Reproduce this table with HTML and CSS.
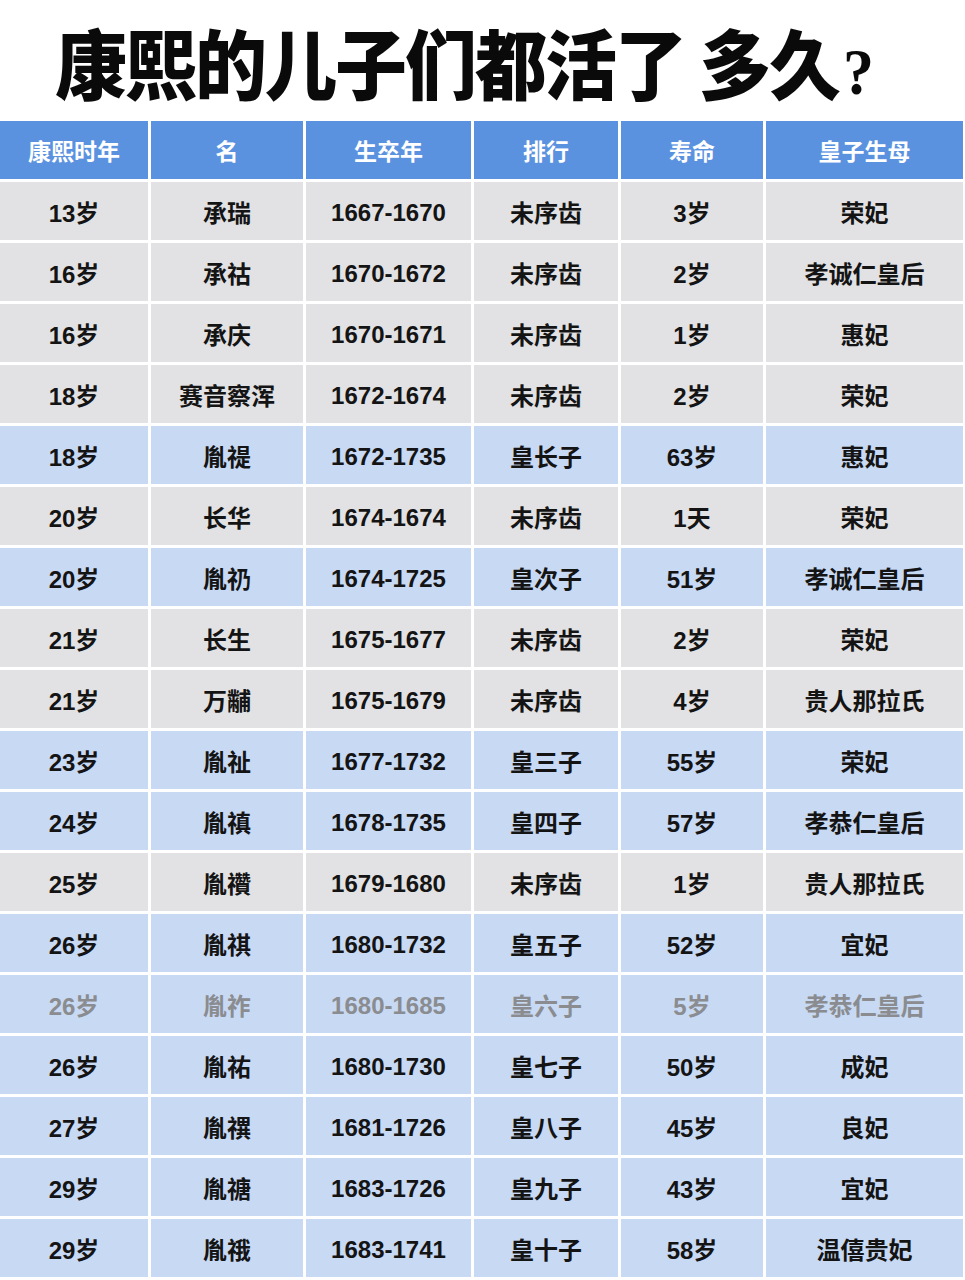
FILE: index.html
```html
<!DOCTYPE html>
<html lang="zh-CN">
<head>
<meta charset="utf-8">
<title>康熙的儿子们都活了多久？</title>
<link rel="stylesheet" href="styles.css">
</head>
<body>
<header class="title-wrap">
  <h1 class="title">康熙的儿子们都活了<span class="gap"></span>多久<span class="q">?</span></h1>
</header>
<div class="table">
  <div class="cell head">康熙时年</div><div class="cell head">名</div><div class="cell head">生卒年</div><div class="cell head">排行</div><div class="cell head">寿命</div><div class="cell head">皇子生母</div>

  <div class="cell g">13岁</div><div class="cell g">承瑞</div><div class="cell g num">1667-1670</div><div class="cell g">未序齿</div><div class="cell g">3岁</div><div class="cell g">荣妃</div>
  <div class="cell g">16岁</div><div class="cell g">承祜</div><div class="cell g num">1670-1672</div><div class="cell g">未序齿</div><div class="cell g">2岁</div><div class="cell g">孝诚仁皇后</div>
  <div class="cell g">16岁</div><div class="cell g">承庆</div><div class="cell g num">1670-1671</div><div class="cell g">未序齿</div><div class="cell g">1岁</div><div class="cell g">惠妃</div>
  <div class="cell g">18岁</div><div class="cell g">赛音察浑</div><div class="cell g num">1672-1674</div><div class="cell g">未序齿</div><div class="cell g">2岁</div><div class="cell g">荣妃</div>
  <div class="cell b">18岁</div><div class="cell b">胤禔</div><div class="cell b num">1672-1735</div><div class="cell b">皇长子</div><div class="cell b">63岁</div><div class="cell b">惠妃</div>
  <div class="cell g">20岁</div><div class="cell g">长华</div><div class="cell g num">1674-1674</div><div class="cell g">未序齿</div><div class="cell g">1天</div><div class="cell g">荣妃</div>
  <div class="cell b">20岁</div><div class="cell b">胤礽</div><div class="cell b num">1674-1725</div><div class="cell b">皇次子</div><div class="cell b">51岁</div><div class="cell b">孝诚仁皇后</div>
  <div class="cell g">21岁</div><div class="cell g">长生</div><div class="cell g num">1675-1677</div><div class="cell g">未序齿</div><div class="cell g">2岁</div><div class="cell g">荣妃</div>
  <div class="cell g">21岁</div><div class="cell g">万黼</div><div class="cell g num">1675-1679</div><div class="cell g">未序齿</div><div class="cell g">4岁</div><div class="cell g">贵人那拉氏</div>
  <div class="cell b">23岁</div><div class="cell b">胤祉</div><div class="cell b num">1677-1732</div><div class="cell b">皇三子</div><div class="cell b">55岁</div><div class="cell b">荣妃</div>
  <div class="cell b">24岁</div><div class="cell b">胤禛</div><div class="cell b num">1678-1735</div><div class="cell b">皇四子</div><div class="cell b">57岁</div><div class="cell b">孝恭仁皇后</div>
  <div class="cell g">25岁</div><div class="cell g">胤禶</div><div class="cell g num">1679-1680</div><div class="cell g">未序齿</div><div class="cell g">1岁</div><div class="cell g">贵人那拉氏</div>
  <div class="cell b">26岁</div><div class="cell b">胤祺</div><div class="cell b num">1680-1732</div><div class="cell b">皇五子</div><div class="cell b">52岁</div><div class="cell b">宜妃</div>
  <div class="cell b dim">26岁</div><div class="cell b dim">胤祚</div><div class="cell b dim num">1680-1685</div><div class="cell b dim">皇六子</div><div class="cell b dim">5岁</div><div class="cell b dim">孝恭仁皇后</div>
  <div class="cell b">26岁</div><div class="cell b">胤祐</div><div class="cell b num">1680-1730</div><div class="cell b">皇七子</div><div class="cell b">50岁</div><div class="cell b">成妃</div>
  <div class="cell b">27岁</div><div class="cell b">胤禩</div><div class="cell b num">1681-1726</div><div class="cell b">皇八子</div><div class="cell b">45岁</div><div class="cell b">良妃</div>
  <div class="cell b">29岁</div><div class="cell b">胤禟</div><div class="cell b num">1683-1726</div><div class="cell b">皇九子</div><div class="cell b">43岁</div><div class="cell b">宜妃</div>
  <div class="cell b">29岁</div><div class="cell b">胤䄉</div><div class="cell b num">1683-1741</div><div class="cell b">皇十子</div><div class="cell b">58岁</div><div class="cell b">温僖贵妃</div>
</div>
</body>
</html>
```
FILE: styles.css
```css
html, body {
  margin: 0;
  padding: 0;
  background: #ffffff;
}
body {
  width: 965px;
  height: 1280px;
  overflow: hidden;
  font-family: "Liberation Sans", "Noto Sans CJK SC", sans-serif;
}
.title-wrap {
  height: 121px;
  display: flex;
  align-items: center;
  padding-left: 55px;
  box-sizing: border-box;
}
.title {
  margin: 0;
  font-family: "Noto Sans CJK SC", sans-serif;
  font-weight: 900;
  font-size: 72px;
  line-height: 1;
  color: #0a0a0a;
  letter-spacing: -2px;
  transform: scaleY(1.06);
  position: relative;
  top: 3px;
  white-space: nowrap;
}
.title .gap {
  display: inline-block;
  width: 14px;
}
.title .q {
  font-family: "Liberation Serif", serif;
  font-weight: 700;
  font-size: 62px;
  margin-left: 4px;
}
.table {
  display: grid;
  grid-template-columns: 148px 152px 165px 144px 142px 197px;
  grid-template-rows: 58px;
  grid-auto-rows: 58px;
  column-gap: 3px;
  row-gap: 3px;
  width: 963px;
}
.cell {
  display: flex;
  align-items: center;
  justify-content: center;
  font-size: 24px;
  font-weight: 700;
  color: #141414;
  white-space: nowrap;
}
.num {
  padding-top: 3px;
}
.head {
  background: #5b92df;
  color: #ffffff;
  font-size: 23px;
}
.g {
  background: #e2e2e4;
}
.b {
  background: #c8d9f4;
}
.dim {
  color: #8a8c90;
}
```
